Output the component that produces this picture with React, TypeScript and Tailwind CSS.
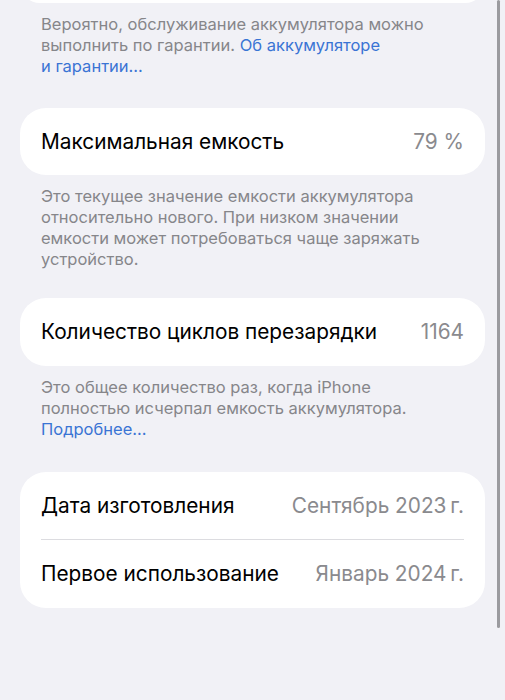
export default function App() {
  return (
    <main className="relative min-h-[700px] w-[505px] overflow-hidden bg-[#f1f1f6] font-['Inter','Noto_Sans',sans-serif]">
      <div className="px-5">
        {/* хвост предыдущей карточки */}
        <div className="-mt-[37px] h-[40px] rounded-[26px] bg-white" />
        <p className="mt-[11px] px-[21px] text-[16.5px] leading-[21px] text-[#86868a]">
          Вероятно, обслуживание аккумулятора можно выполнить по гарантии.{" "}
          <span className="text-[#3a74d4]">
            Об аккумуляторе
            <br />и гарантии…
          </span>
        </p>

        <div className="mt-[31px] flex h-[67px] items-center justify-between rounded-[26px] bg-white px-[21px] text-[20.8px]">
          <span className="text-black">Максимальная емкость</span>
          <span className="text-[#8a8a8e]">79 %</span>
        </div>
        <p className="mt-[11px] px-[21px] text-[16.5px] leading-[21px] text-[#86868a]">
          Это текущее значение емкости аккумулятора относительно нового. При низком значении емкости может потребоваться чаще заряжать устройство.
        </p>

        <div className="mt-[28px] flex h-[68px] items-center justify-between rounded-[26px] bg-white px-[21px] text-[20.8px]">
          <span className="text-black">Количество циклов перезарядки</span>
          <span className="text-[#8a8a8e]">1164</span>
        </div>
        <p className="mt-[11px] px-[21px] text-[16.5px] leading-[21px] text-[#86868a]">
          Это общее количество раз, когда iPhone полностью исчерпал емкость аккумулятора.{" "}
          <span className="text-[#3a74d4]">Подробнее…</span>
        </p>

        <div className="mt-[32px] rounded-[26px] bg-white text-[20.8px]">
          <div className="flex h-[67px] items-center justify-between px-[21px]">
            <span className="text-black">Дата изготовления</span>
            <span className="text-[#8a8a8e]">Сентябрь 2023{"\u2009"}г.</span>
          </div>
          <div className="mx-[21px] h-px bg-[#dcdce0]" />
          <div className="flex h-[68px] items-center justify-between px-[21px]">
            <span className="text-black">Первое использование</span>
            <span className="text-[#8a8a8e]">Январь 2024{"\u2009"}г.</span>
          </div>
        </div>
      </div>

      {/* индикатор прокрутки */}
      <div className="absolute right-[5px] top-0 h-[628px] w-[3px] rounded-full bg-[#9b9b9f]" />
    </main>
  );
}
